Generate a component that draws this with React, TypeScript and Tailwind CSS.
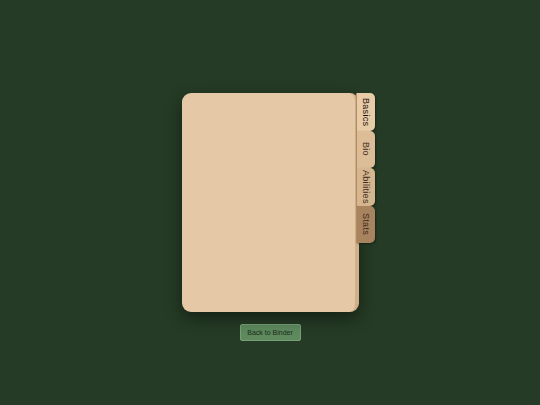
import { useState } from 'react';

const tabs = ['Basics', 'Bio', 'Abilities', 'Stats'];

const tabColor: Record<string, string> = {
    Basics: 'bg-[#e8cca8]',
    Bio: 'bg-[#dcbd97]',
    Abilities: 'bg-[#d6b68f]',
    Stats: 'bg-[#a7835f]',
};

const App = () => {
    const [active, setActive] = useState('Basics');

    return (
        <div className="min-h-screen w-full bg-[#253b25] flex flex-col items-center pt-[93px] font-['Liberation_Sans',Arial,sans-serif]">
            <div className="relative w-[177px] h-[219px]">
                {/* folder page */}
                <div className="w-full h-full rounded-[9px] bg-[#e5c9a6] border-r-[4px] border-[#d2b18a] shadow-[0_6px_16px_rgba(0,0,0,0.45)]" />

                {/* side tabs */}
                <div className="absolute top-0 left-[174px] flex flex-col">
                    {tabs.map((t) => (
                        <button
                            key={t}
                            onClick={() => setActive(t)}
                            className={`w-[19px] h-[37.5px] flex items-center justify-center rounded-r-[5px] border-l border-[#b08c66] shadow-[1px_1px_2px_rgba(0,0,0,0.35)] ${tabColor[t]}`}
                        >
                            <span className={`[writing-mode:vertical-rl] text-[9px] leading-none tracking-[0.3px] ${active === t ? 'text-[#1f170e] font-medium' : 'text-[#3d2d1d]'}`}>
                                {t}
                            </span>
                        </button>
                    ))}
                </div>
            </div>

            <button className="mt-[12px] w-[61px] h-[17px] rounded-[2px] bg-[#5e8a5e] border border-[#78a078] text-[#1c2c1c] text-[7px] leading-none">
                Back to Binder
            </button>
        </div>
    );
};

export default App;
